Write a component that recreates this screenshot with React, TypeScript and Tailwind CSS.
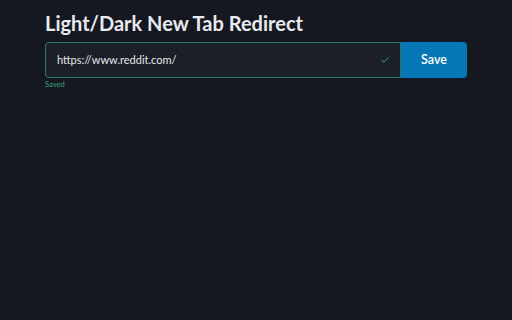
export default function App() {
  return (
    <div className="min-h-screen w-full bg-[#151821] font-['Lato',sans-serif]">
      <div className="mx-[45px] pt-[9px]">
        <h1 className="text-[20px] font-bold leading-[28px] text-[#e8eaee]">Light/Dark New Tab Redirect</h1>
        <div className="mt-[5px] flex h-[36px]">
          <div className="flex flex-1 items-center rounded-l-[4px] border border-[#2c7a5d] bg-[#1c1f27] pl-[11px] pr-[10px]">
            <span className="flex-1 text-[11px] text-[#e6e8ec]">https://www.reddit.com/</span>
            <svg width="10" height="10" viewBox="0 0 24 24" fill="none" stroke="#2e8a66" strokeWidth="2.5" strokeLinecap="round" strokeLinejoin="round">
              <path d="M20 6 9 17l-5-5" />
            </svg>
          </div>
          <button className="w-[66px] rounded-r-[4px] bg-[#0577b5] text-[12.5px] font-semibold text-white">Save</button>
        </div>
        <div className="mt-[2px] text-[7.5px] leading-[10px] text-[#34a37b]">Saved</div>
      </div>
    </div>
  )
}
